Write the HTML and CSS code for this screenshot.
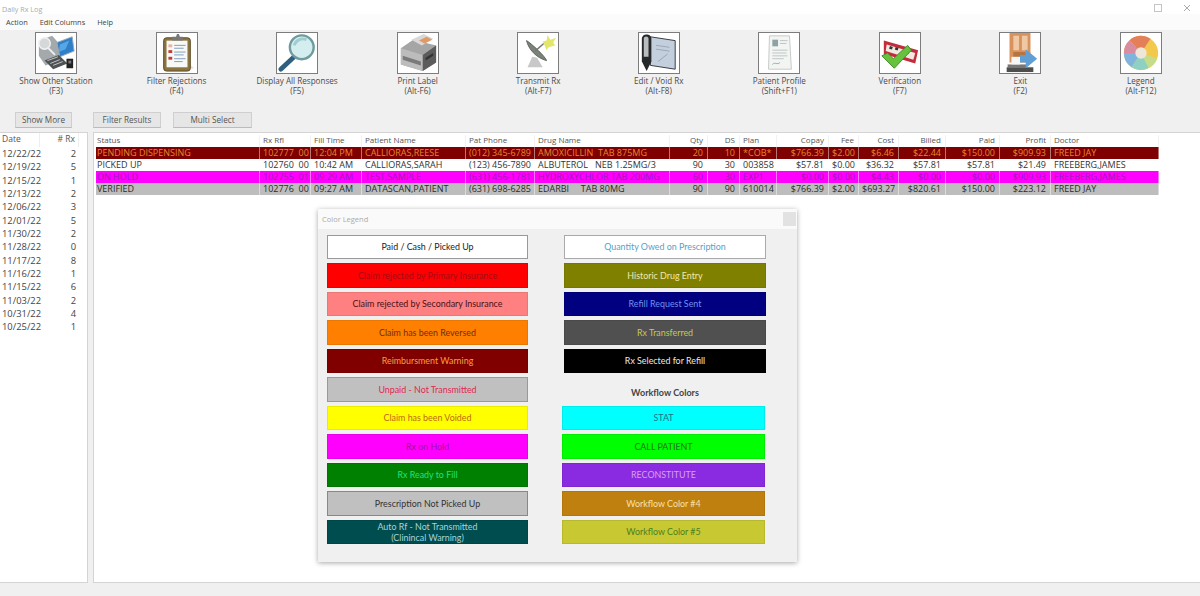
FILE: index.html
```html
<!DOCTYPE html>
<html lang="en">
<head>
    <meta charset="UTF-8">
    <meta name="viewport" content="width=device-width, initial-scale=1.0">
    <title>Daily Rx Log</title>
    <link rel="stylesheet" href="styles.css">
</head>
<body>
    <div class="titlebar">
        <span class="title-text">Daily Rx Log</span>
        <div class="window-btns">
            <svg width="8" height="8" viewBox="0 0 8 8"><rect x=".5" y=".5" width="7" height="7" fill="none" stroke="#c4c4c4"/></svg>
            <svg width="8" height="8" viewBox="0 0 8 8"><path d="M1 1l6 6M7 1L1 7" fill="none" stroke="#aaa"/></svg>
        </div>
    </div>

    <div class="menubar">
        <span class="menu-item">Action</span>
        <span class="menu-item">Edit Columns</span>
        <span class="menu-item">Help</span>
    </div>

    <div class="toolbar">
        <div class="tool">
            <svg class="tool-icon" viewBox="0 0 42 42">
                <path d="M3 8l14-5 8 9v16L10 34 3 24z" fill="#a4a9ab"/>
                <circle cx="9" cy="11" r="6" fill="#d4d8d8" stroke="#f2f2f2" stroke-width="1.500"/>
                <path d="M12 15l8 8" stroke="#eee" stroke-width="2"/>
                <path d="M22 10l16-6 2 15-15 6z" fill="#2f7fc8" stroke="#9ab" stroke-width="1"/>
                <path d="M25 12l10-4-4 9-7 3z" fill="#58a6e6"/>
                <path d="M9 29l15-6 9 9-15 6z" fill="#4e5254"/>
                <path d="M12 29l11-4M15 32l10-4M18 34l10-4" stroke="#c8c8c8"/>
                <rect x="32" y="27" width="7" height="10" fill="#222"/>
                <rect x="34" y="29" width="3" height="3" fill="#777"/>
            </svg>
            <span class="tool-label">Show Other Station<br>(F3)</span>
        </div>
        <div class="tool">
            <svg class="tool-icon" viewBox="0 0 42 42">
                <path d="M34 33l5 4-12 1z" fill="#ddd"/>
                <rect x="7" y="5" width="28" height="35" rx="3" fill="#8b7440" stroke="#5b4a25"/>
                <rect x="10" y="8" width="22" height="28" fill="#f8f8f4"/>
                <path d="M16 8V4h4l1-3 2 0 1 3h3v4z" fill="#777"/>
                <rect x="12" y="12" width="4" height="3" fill="#e8b0a8"/>
                <rect x="12" y="18" width="4" height="3" fill="#c83a3a"/>
                <rect x="12" y="25" width="4" height="3" fill="#c83a3a"/>
                <path d="M18 13h12M18 16h10M18 20h12M18 23h10M18 27h12M18 30h9" stroke="#7d9cc0"/>
            </svg>
            <span class="tool-label">Filter Rejections<br>(F4)</span>
        </div>
        <div class="tool">
            <svg class="tool-icon" viewBox="0 0 42 42">
                <path d="M18 25L4 38" stroke="#2e5f7e" stroke-width="5" stroke-linecap="round"/>
                <circle cx="26" cy="15" r="12.500" fill="#d4edee" stroke="#6f9b9f" stroke-width="2.500"/>
                <path d="M18 13c2-6 8-8 13-6" fill="none" stroke="#9fcdd0" stroke-width="3"/>
            </svg>
            <span class="tool-label">Display All Responses<br>(F5)</span>
        </div>
        <div class="tool">
            <svg class="tool-icon" viewBox="0 0 42 42">
                <path d="M3 16l13-9 24 6v18L26 40 3 33z" fill="#a5a5a5"/>
                <path d="M14 7l13-6 10 5-12 7z" fill="#d8d8d8"/>
                <path d="M22 8l8-4 6 3-8 4z" fill="#e09a6a"/>
                <path d="M3 16l23 7v17L3 33z" fill="#bcbcbc"/>
                <path d="M26 23l14-10v18L26 40z" fill="#5c5c5c"/>
                <path d="M5 24l19 6v4L5 28z" fill="#7a7a7a"/>
                <path d="M29 26l8-5v3l-8 5z" fill="#333"/>
            </svg>
            <span class="tool-label">Print Label<br>(Alt-F6)</span>
        </div>
        <div class="tool">
            <svg class="tool-icon" viewBox="0 0 42 42">
                <path d="M10 36l5-11 5 1 6 10z" fill="#c8c8c8"/>
                <path d="M9 8c2 9 10 18 21 21-1-4-16-18-21-21z" fill="#7b8378" stroke="#5c6259"/>
                <path d="M18 19l9-8" stroke="#777" stroke-width="1.500"/>
                <path d="M26 9l4-1 1-6 3 5 6-2-3 5 2 3-7 2-2 3-2-5z" fill="#e4e66c"/>
            </svg>
            <span class="tool-label">Transmit Rx<br>(Alt-F7)</span>
        </div>
        <div class="tool">
            <svg class="tool-icon" viewBox="0 0 42 42">
                <path d="M12 4l26 4v30l-26-4z" fill="#c3cfdd" stroke="#33383d"/>
                <path d="M18 13l14 2M18 17l14 2M20 30l10-8" stroke="#97a5b4"/>
                <path d="M3 6c0-6 10-6 10 0v24l-5 10-5-10z" fill="#26282a"/>
                <path d="M5 6c0-3 5-3 5 0v19H5z" fill="#b9bcbe"/>
            </svg>
            <span class="tool-label">Edit / Void Rx<br>(Alt-F8)</span>
        </div>
        <div class="tool">
            <svg class="tool-icon" viewBox="0 0 42 42">
                <path d="M11 3h21l2 35H10z" fill="#f3f5f3" stroke="#c4c8c6"/>
                <rect x="14" y="7" width="6" height="7" fill="#8da1a6"/>
                <path d="M22 8h8M22 11h7M14 18h16M14 21h15M14 24h16M14 27h12" stroke="#bcc4c4"/>
                <path d="M14 33c3-3 5 1 8-2" fill="none" stroke="#9aa"/>
            </svg>
            <span class="tool-label">Patient Profile<br>(Shift+F1)</span>
        </div>
        <div class="tool">
            <svg class="tool-icon" viewBox="0 0 42 42">
                <path d="M4 8l36 10-3 14-33-10z" fill="#c22c3c"/>
                <path d="M7 12l30 9-2 7-29-9z" fill="#efe9e0"/>
                <path d="M10 15l3 1M16 16l3 1M27 20l3 1" stroke="#333" stroke-width="3"/>
                <path d="M2 24l6-3 6 6L29 13l4 5-18 19z" fill="#66c23c" stroke="#3f8a26"/>
            </svg>
            <span class="tool-label">Verification<br>(F7)</span>
        </div>
        <div class="tool">
            <svg class="tool-icon" viewBox="0 0 42 42">
                <path d="M10 0h22v31H10z" fill="#d9925c"/>
                <path d="M14 3h6v15h-6zM23 3h6v15h-6z" fill="#efc9a6"/>
                <path d="M14 20h13v10H14z" fill="#b8743f"/>
                <path d="M8 33h20v3H8z" fill="#777"/>
                <path d="M7 36h28v5H7z" fill="#4e4e4e"/>
                <path d="M21 23h6v-6l12 10-12 10v-6h-6z" fill="#5f9fd6"/>
                <path d="M12 25h9v8h-9z" fill="#f6f6f6"/>
            </svg>
            <span class="tool-label">Exit<br>(F2)</span>
        </div>
        <div class="tool">
            <svg class="tool-icon" viewBox="0 0 42 42">
                <circle cx="21" cy="21" r="18" fill="#f2c94c"/>
                <path d="M21 21L9 7.500A18 18 0 0 1 31 6z" fill="#e3805a"/>
                <path d="M21 21L9 7.500A18 18 0 0 0 3 21z" fill="#d98ba0"/>
                <path d="M21 21H3a18 18 0 0 0 8 15z" fill="#7fb4de"/>
                <path d="M21 21L11 36a18 18 0 0 0 18 .500z" fill="#8fd0c4"/>
                <path d="M21 21l8 15.500A18 18 0 0 0 38 27z" fill="#c5dd8a"/>
                <circle cx="21" cy="21" r="6" fill="#efe6da"/>
            </svg>
            <span class="tool-label">Legend<br>(Alt-F12)</span>
        </div>
    </div>

    <div class="actions">
        <button class="action-btn btn-more">Show More</button>
        <button class="action-btn btn-filter">Filter Results</button>
        <button class="action-btn btn-multi">Multi Select</button>
    </div>

    <div class="main">
        <div class="dates-panel">
            <table class="dates">
                <thead>
                    <tr><th class="date-col">Date</th><th class="num">#&nbsp;Rx</th></tr>
                </thead>
                <tbody>
                    <tr><td>12/22/22</td><td class="num">2</td></tr>
                    <tr><td>12/19/22</td><td class="num">5</td></tr>
                    <tr><td>12/15/22</td><td class="num">1</td></tr>
                    <tr><td>12/13/22</td><td class="num">2</td></tr>
                    <tr><td>12/06/22</td><td class="num">3</td></tr>
                    <tr><td>12/01/22</td><td class="num">5</td></tr>
                    <tr><td>11/30/22</td><td class="num">2</td></tr>
                    <tr><td>11/28/22</td><td class="num">0</td></tr>
                    <tr><td>11/17/22</td><td class="num">8</td></tr>
                    <tr><td>11/16/22</td><td class="num">1</td></tr>
                    <tr><td>11/15/22</td><td class="num">6</td></tr>
                    <tr><td>11/03/22</td><td class="num">2</td></tr>
                    <tr><td>10/31/22</td><td class="num">4</td></tr>
                    <tr><td>10/25/22</td><td class="num">1</td></tr>
                </tbody>
            </table>
        </div>

        <div class="log-panel">
            <table class="log">
                <colgroup>
                    <col class="c-status"><col class="c-rx"><col class="c-time"><col class="c-name"><col class="c-phone">
                    <col class="c-drug"><col class="c-qty"><col class="c-ds"><col class="c-plan"><col class="c-copay">
                    <col class="c-fee"><col class="c-cost"><col class="c-billed"><col class="c-paid"><col class="c-profit"><col class="c-doctor">
                </colgroup>
                <thead>
                    <tr>
                        <th>Status</th><th>Rx Rfl</th><th>Fill Time</th><th>Patient Name</th><th>Pat Phone</th><th>Drug Name</th>
                        <th class="num">Qty</th><th class="num">DS</th><th>Plan</th><th class="num">Copay</th><th class="num">Fee</th>
                        <th class="num">Cost</th><th class="num">Billed</th><th class="num">Paid</th><th class="num">Profit</th><th>Doctor</th>
                    </tr>
                </thead>
                <tbody>
                    <tr class="row-warning">
                        <td>PENDING DISPENSING</td><td>102777&nbsp;&nbsp;00</td><td>12:04 PM</td><td>CALLIORAS,REESE</td><td>(012) 345-6789</td><td>AMOXICILLIN&nbsp;&nbsp;TAB 875MG</td>
                        <td class="num">20</td><td class="num">10</td><td>*COB*</td><td class="num">$766.39</td><td class="num">$2.00</td>
                        <td class="num">$6.46</td><td class="num">$22.44</td><td class="num">$150.00</td><td class="num">$909.93</td><td>FREED JAY</td>
                    </tr>
                    <tr class="row-picked">
                        <td>PICKED UP</td><td>102760&nbsp;&nbsp;00</td><td>10:42 AM</td><td>CALLIORAS,SARAH</td><td>(123) 456-7890</td><td>ALBUTEROL &nbsp;&nbsp;NEB 1.25MG/3</td>
                        <td class="num">90</td><td class="num">30</td><td>003858</td><td class="num">$57.81</td><td class="num">$0.00</td>
                        <td class="num">$36.32</td><td class="num">$57.81</td><td class="num">$57.81</td><td class="num">$21.49</td><td>FREEBERG,JAMES</td>
                    </tr>
                    <tr class="row-hold">
                        <td>ON HOLD</td><td>102755&nbsp;&nbsp;01</td><td>09:29 AM</td><td>TEST,SAMPLE</td><td>(631) 456-1781</td><td>HYDROXYCHLOR TAB 200MG</td>
                        <td class="num">60</td><td class="num">30</td><td>EXP1</td><td class="num">$0.00</td><td class="num">$0.00</td>
                        <td class="num">$4.43</td><td class="num">$0.00</td><td class="num">$0.00</td><td class="num">$909.93</td><td>FREEBERG,JAMES</td>
                    </tr>
                    <tr class="row-verified">
                        <td>VERIFIED</td><td>102776&nbsp;&nbsp;00</td><td>09:27 AM</td><td>DATASCAN,PATIENT</td><td>(631) 698-6285</td><td>EDARBI &nbsp;&nbsp;&nbsp;&nbsp;TAB 80MG</td>
                        <td class="num">90</td><td class="num">90</td><td>610014</td><td class="num">$766.39</td><td class="num">$2.00</td>
                        <td class="num">$693.27</td><td class="num">$820.61</td><td class="num">$150.00</td><td class="num">$223.12</td><td>FREED JAY</td>
                    </tr>
                </tbody>
            </table>
        </div>
    </div>

    <div class="statusbar"></div>

    <!-- Color legend window, sits over the log -->
    <div class="legend">
        <div class="legend-title">
            <span>Color Legend</span>
            <span class="legend-close"></span>
        </div>
        <div class="legend-body">
            <div class="legend-col">
                <div class="swatch sw-paid">Paid / Cash / Picked Up</div>
                <div class="swatch sw-red">Claim rejected by Primary Insurance</div>
                <div class="swatch sw-pink">Claim rejected by Secondary Insurance</div>
                <div class="swatch sw-orange">Claim has been Reversed</div>
                <div class="swatch sw-maroon">Reimbursment Warning</div>
                <div class="swatch sw-unpaid">Unpaid - Not Transmitted</div>
                <div class="swatch sw-yellow">Claim has been Voided</div>
                <div class="swatch sw-magenta">Rx on Hold</div>
                <div class="swatch sw-green">Rx Ready to Fill</div>
                <div class="swatch sw-gray">Prescription Not Picked Up</div>
                <div class="swatch sw-teal">Auto Rf - Not Transmitted<br>(Clinincal Warning)</div>
            </div>
            <div class="legend-col legend-col-right">
                <div class="swatch sw-owed">Quantity Owed on Prescription</div>
                <div class="swatch sw-olive">Historic Drug Entry</div>
                <div class="swatch sw-navy">Refill Request Sent</div>
                <div class="swatch sw-dark">Rx Transferred</div>
                <div class="swatch sw-black">Rx Selected for Refill</div>
                <div class="workflow-title">Workflow Colors</div>
                <div class="workflow">
                    <div class="swatch sw-cyan">STAT</div>
                    <div class="swatch sw-lime">CALL PATIENT</div>
                    <div class="swatch sw-purple">RECONSTITUTE</div>
                    <div class="swatch sw-amber">Workflow Color #4</div>
                    <div class="swatch sw-mustard">Workflow Color #5</div>
                </div>
            </div>
        </div>
    </div>
</body>
</html>
```

FILE: styles.css
```css
html, body {
    margin: 0;
    padding: 0;
    height: 596px;
    overflow: hidden;
}

body {
    position: relative;
    display: flex;
    flex-direction: column;
    font-family: "Open Sans", "Noto Sans", sans-serif;
    font-size: 9px;
    color: #333;
    background-color: #f0f0f0;
}

/* Title and menu */
.titlebar {
    display: flex;
    justify-content: space-between;
    align-items: center;
    height: 14px;
    padding: 0 9px 0 2px;
    background-color: #fff;
}

.title-text {
    color: #aaa;
    font-size: 7.200px;
    margin-top: 3px;
}

.window-btns {
    display: flex;
    gap: 21px;
    margin-top: 2px;
}

.menubar {
    display: flex;
    gap: 12px;
    height: 16px;
    align-items: center;
    padding-left: 6px;
    font-size: 7.400px;
    color: #444;
    background-color: #fbfbfb;
}

/* Big toolbar */
.toolbar {
    display: flex;
    justify-content: space-between;
    height: 80px;
    padding: 2px 3px 0 0;
    background-color: #f0f0f0;
}

.tool {
    display: flex;
    flex-direction: column;
    align-items: center;
    width: 112px;
}

.tool-icon {
    box-sizing: border-box;
    width: 42px;
    height: 42px;
    margin-bottom: 2px;
    background-color: #fff;
    border: 1px solid #7d7d7d;
}

.tool-label {
    font-size: 8.100px;
    line-height: 10px;
    text-align: center;
    color: #4a4a4a;
}

/* Small buttons */
.actions {
    display: flex;
    height: 20px;
    padding-left: 15px;
}

.action-btn {
    height: 16px;
    padding: 0 0 2px;
    font-family: inherit;
    font-size: 8.200px;
    color: #555;
    background-color: #e6e6e6;
    border: 1px solid #cfcfcf;
    border-bottom-color: #bbb;
}

.btn-more {
    width: 57px;
}

.btn-filter {
    width: 68px;
    margin-left: 21px;
}

.btn-multi {
    width: 79px;
    margin-left: 12px;
}

/* Main panels */
.main {
    display: flex;
    gap: 5px;
    height: 451px;
}

.dates-panel {
    box-sizing: border-box;
    width: 88px;
    background-color: #fff;
    border: 1px solid #d4d4d4;
    border-left: none;
}

.log-panel {
    flex: 1;
    box-sizing: border-box;
    padding: 2px 0 0 2px;
    background-color: #fff;
    border: 1px solid #d4d4d4;
    border-right: none;
}

.statusbar {
    height: 13px;
}

table {
    border-collapse: separate;
    border-spacing: 0;
    table-layout: fixed;
}

th {
    font-weight: normal;
    text-align: left;
    vertical-align: top;
    color: #555;
    font-size: 8px;
}

.num {
    text-align: right;
}

/* Left date list */
.dates {
    width: 79px;
    font-size: 9.400px;
    color: #444;
}

.dates th {
    height: 14px;
    padding: 1px 3px 0 2px;
    line-height: 10px;
    font-size: 8.500px;
    box-sizing: border-box;
    border-right: 1px solid #eee;
}

.dates td {
    height: 13.340px;
    padding: 0 3px 0 2px;
    line-height: 13px;
}

/* Rx log table */
.log {
    width: 1063px;
}

.c-status { width: 164px; }
.c-rx { width: 51px; }
.c-time { width: 51px; }
.c-name { width: 104px; }
.c-phone { width: 69px; }
.c-drug { width: 135px; }
.c-qty { width: 38px; }
.c-ds { width: 32px; }
.c-plan { width: 37px; }
.c-copay { width: 52px; }
.c-fee { width: 30px; }
.c-cost { width: 40px; }
.c-billed { width: 47px; }
.c-paid { width: 54px; }
.c-profit { width: 51px; }
.c-doctor { width: 108px; }

.log th {
    height: 12px;
    padding: 0 4px 0 3px;
    line-height: 9px;
    overflow: hidden;
    white-space: nowrap;
    border-right: 1px solid #f2f2f2;
}

.log td {
    height: 12px;
    padding: 0 4px 0 3px;
    line-height: 12px;
    overflow: hidden;
    white-space: nowrap;
    border-right: 1px solid rgba(255, 255, 255, 0.45);
}

.log th:first-child,
.log td:first-child {
    padding-left: 1px;
}

.row-warning td {
    background-color: #7f0000;
    color: #e8862e;
}

.row-picked td {
    background-color: #fff;
    color: #333;
}

.row-hold td {
    background-color: #ff00ff;
    color: #a018b0;
}

.row-verified td {
    background-color: #bdbdbd;
    color: #2c2c2c;
}

/* Legend window */
.legend {
    position: absolute;
    left: 318px;
    top: 209px;
    width: 479px;
    height: 353px;
    background-color: #f0f0f0;
    box-shadow: 0 1px 5px rgba(0, 0, 0, 0.35);
}

.legend-title {
    display: flex;
    justify-content: space-between;
    align-items: center;
    height: 20px;
    padding: 0 1px 0 4px;
    font-size: 7.500px;
    color: #aaa;
    background-color: #fafafa;
}

.legend-close {
    width: 13px;
    height: 14px;
    background-color: #e2e2e2;
}

.legend-body {
    display: flex;
    padding: 5.500px 0 0 9px;
}

.legend-col {
    display: flex;
    flex-direction: column;
    gap: 4px;
    width: 201px;
}

.legend-col-right {
    width: 202px;
    margin-left: 36px;
}

.workflow-title {
    height: 24.500px;
    line-height: 32px;
    text-align: center;
    font-family: "Lato", "Open Sans", sans-serif;
    font-size: 9px;
    font-weight: 700;
    color: #444;
}

.workflow {
    display: flex;
    flex-direction: column;
    gap: 4px;
    margin: 0 1px 0 -2px;
}

.swatch {
    box-sizing: border-box;
    display: flex;
    align-items: center;
    justify-content: center;
    height: 24.500px;
    font-family: "Lato", "Open Sans", sans-serif;
    font-size: 8.900px;
    line-height: 11px;
    text-align: center;
    border: 1px solid rgba(0, 0, 0, 0.08);
}

.sw-paid { background-color: #fff; color: #222; border-color: #999; }
.sw-red { background-color: #ff0000; color: #a80a14; }
.sw-pink { background-color: #ff8080; color: #4a1018; }
.sw-orange { background-color: #ff8000; color: #6e2d08; }
.sw-maroon { background-color: #800000; color: #f5a040; }
.sw-unpaid { background-color: #c0c0c0; color: #e02850; border-color: #999; }
.sw-yellow { background-color: #ffff00; color: #c06a10; }
.sw-magenta { background-color: #ff00ff; color: #a010a0; }
.sw-green { background-color: #008000; color: #20e080; }
.sw-gray { background-color: #c0c0c0; color: #333; border-color: #888; }
.sw-teal { background-color: #004d50; color: #a8d4d8; }
.sw-owed { background-color: #fff; color: #5aa0c8; border-color: #aaa; }
.sw-olive { background-color: #808000; color: #f0e8b0; }
.sw-navy { background-color: #000080; color: #7090f0; }
.sw-dark { background-color: #505050; color: #c8c850; }
.sw-black { background-color: #000; color: #e8e8e8; }
.sw-cyan { background-color: #00ffff; color: #207088; }
.sw-lime { background-color: #00ff00; color: #207020; }
.sw-purple { background-color: #8a2be2; color: #d8a0e8; }
.sw-amber { background-color: #c08010; color: #f8e0a8; }
.sw-mustard { background-color: #c8c832; color: #488020; }
```
